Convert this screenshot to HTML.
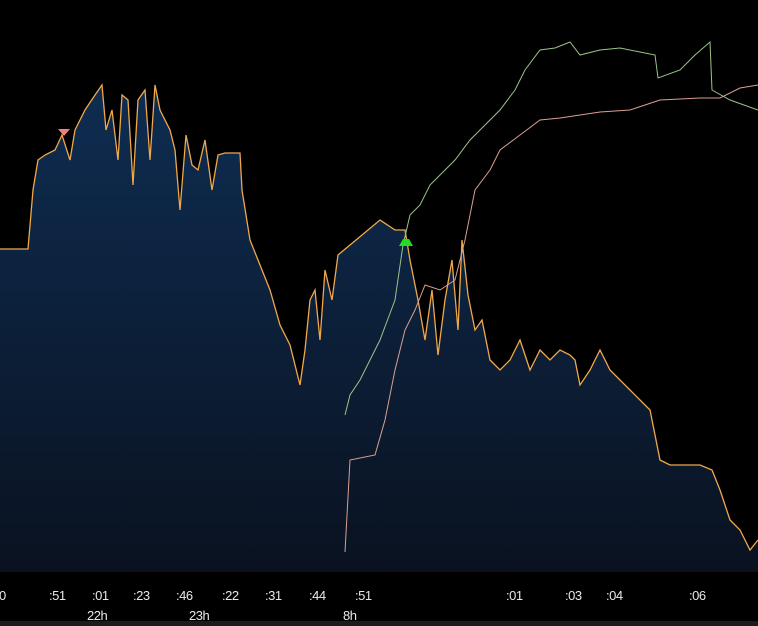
<!DOCTYPE html>
<html><head><style>
html,body{margin:0;padding:0;background:#000;width:758px;height:626px;overflow:hidden}
.t{position:absolute;color:#e8e8e8;font:13px "Liberation Sans",sans-serif;letter-spacing:-0.5px}
</style></head><body>
<svg width="758" height="626" style="position:absolute;left:0;top:0">
<defs><linearGradient id="g" x1="0" y1="80" x2="0" y2="572" gradientUnits="userSpaceOnUse">
<stop offset="0" stop-color="#0e2d52"/><stop offset="1" stop-color="#0a1220"/></linearGradient></defs>
<rect x="0" y="0" width="758" height="626" fill="#000"/>
<path fill="url(#g)" stroke="none" d="M0,249 L28,249 33,190 38,160 45,155 55,150 62,135 70,160 75,130 85,110 95,95 102,85 106,130 112,110 118,160 122,95 128,100 133,185 138,100 145,90 150,160 155,85 160,110 170,130 175,150 180,210 186,135 192,165 198,170 205,140 212,190 218,155 225,153 240,153 242,190 250,240 260,265 270,290 280,325 290,345 300,385 305,350 310,300 315,290 320,340 325,270 332,300 338,255 380,220 395,230 405,230 410,260 418,300 425,340 432,290 438,355 445,300 452,260 458,330 462,240 468,295 475,330 482,320 490,360 500,370 510,360 520,340 530,370 540,350 550,360 560,350 570,355 575,360 580,385 590,370 600,350 610,370 620,380 630,390 640,400 650,410 660,460 670,465 680,465 700,465 712,470 720,490 730,520 740,530 750,550 758,540 L758,572 L0,572 Z"/>
<polyline fill="none" stroke="#f0a848" stroke-width="1.3" points="0,249 28,249 33,190 38,160 45,155 55,150 62,135 70,160 75,130 85,110 95,95 102,85 106,130 112,110 118,160 122,95 128,100 133,185 138,100 145,90 150,160 155,85 160,110 170,130 175,150 180,210 186,135 192,165 198,170 205,140 212,190 218,155 225,153 240,153 242,190 250,240 260,265 270,290 280,325 290,345 300,385 305,350 310,300 315,290 320,340 325,270 332,300 338,255 380,220 395,230 405,230 410,260 418,300 425,340 432,290 438,355 445,300 452,260 458,330 462,240 468,295 475,330 482,320 490,360 500,370 510,360 520,340 530,370 540,350 550,360 560,350 570,355 575,360 580,385 590,370 600,350 610,370 620,380 630,390 640,400 650,410 660,460 670,465 680,465 700,465 712,470 720,490 730,520 740,530 750,550 758,540"/>
<polyline fill="none" stroke="#9ac488" stroke-width="1" points="345,415 350,395 360,380 380,340 395,300 403,245 410,215 420,205 430,185 440,175 455,160 470,140 485,125 500,110 515,90 525,70 540,50 555,48 570,42 580,55 600,50 620,48 640,52 655,55 658,78 680,70 695,55 710,42 712,90 730,100 758,110"/>
<polyline fill="none" stroke="#d8a090" stroke-width="1" points="345,552 350,460 375,455 385,420 395,370 405,330 415,310 425,285 440,290 455,280 465,240 475,190 490,170 500,150 520,135 540,120 560,118 580,115 600,112 630,110 660,100 700,98 720,98 740,88 758,85"/>
<polygon fill="#f08080" points="58,129 70,129 64,136"/>
<polygon fill="#22dd22" points="399,246 413,246 409,239 403,239"/>
<rect x="0" y="621" width="758" height="5" fill="#1c1c1c"/>
</svg>
<div class="t" style="left:-1px;top:588px">0</div>
<div class="t" style="left:49px;top:588px">:51</div>
<div class="t" style="left:92px;top:588px">:01</div>
<div class="t" style="left:133px;top:588px">:23</div>
<div class="t" style="left:176px;top:588px">:46</div>
<div class="t" style="left:222px;top:588px">:22</div>
<div class="t" style="left:265px;top:588px">:31</div>
<div class="t" style="left:309px;top:588px">:44</div>
<div class="t" style="left:355px;top:588px">:51</div>
<div class="t" style="left:506px;top:588px">:01</div>
<div class="t" style="left:565px;top:588px">:03</div>
<div class="t" style="left:606px;top:588px">:04</div>
<div class="t" style="left:689px;top:588px">:06</div>
<div class="t" style="left:87px;top:608px">22h</div>
<div class="t" style="left:189px;top:608px">23h</div>
<div class="t" style="left:343px;top:608px">8h</div>
</body></html>
